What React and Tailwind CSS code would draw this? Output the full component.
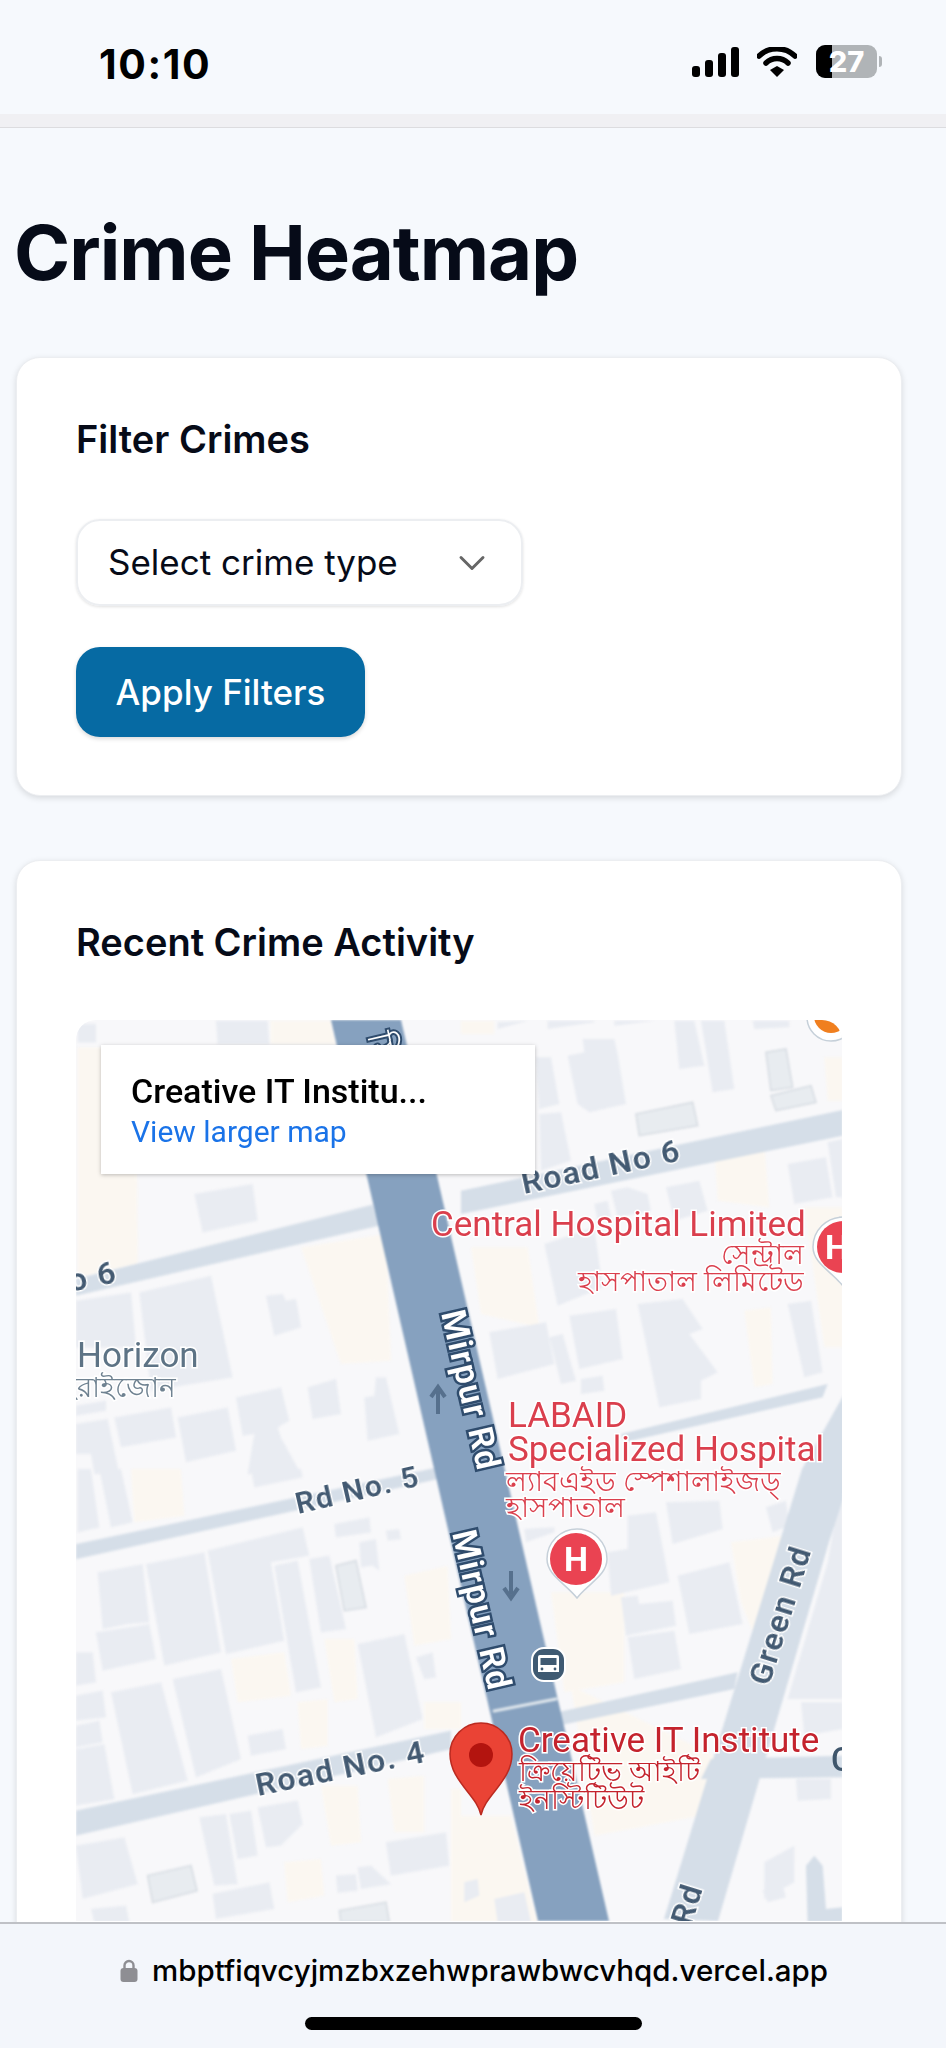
import { ChevronDown } from 'lucide-react';

// map shapes are traced from 3x crops, so each group below is scaled by 1/3
const groups = [
  {
    at: 'translate(70 1015) scale(.3333)',
    beige: [
      '20,100 195,100 200,750 20,790',
      '600,20 780,20 795,90 600,90',
      '690,700 945,660 960,1040 810,1050',
    ],
    roads: ['15,795 905,572 925,635 15,845'],
    blocks: [
      '20,85 20,30 75,30 75,85',
      '435,20 590,20 595,90 440,90',
      '370,540 545,510 560,620 395,655',
      '15,860 180,835 195,1000 15,1000',
      '205,835 420,785 485,1090 240,1130',
      '585,845 635,840 645,860 675,855 690,940 610,965',
      '495,1150 630,1120 655,1220 620,1240 630,1270 690,1380 530,1380 550,1260 515,1265',
      '710,1120 795,1095 810,1200 725,1215',
      '880,1150 910,1145 915,1090 945,1090 985,1260 890,1280',
      '130,1210 300,1180 315,1270 150,1300',
      '320,1210 470,1180 495,1310 345,1345',
      '15,1175 105,1160 105,1190 15,1205',
      '15,1230 110,1215 145,1380 70,1380 60,1320 15,1320',
    ],
  },
  {
    at: 'translate(460 1015) scale(.3333)',
    beige: [
      '0,20 100,20 100,60 0,60',
      '1090,130 1145,130 1145,260 1100,260',
      '760,400 910,390 925,580 770,560',
      '30,700 200,700 235,940 60,900',
      '850,890 930,880 935,1110 880,1120',
      '1030,580 1145,580 1145,1000 1090,1000',
    ],
    roads: ['0,530 1145,288 1145,365 0,600', '480,1260 1100,1110 1085,1150 490,1285'],
    blocks: [
      '225,130 270,130 295,270 235,285',
      '235,300 300,295 330,440 240,470',
      '365,75 460,75 470,120 495,270 385,295 350,270 320,125 370,115',
      '640,20 700,20 730,155 655,165',
      '720,20 790,20 820,225 755,235',
      '875,20 985,20 985,40 880,45',
      '260,20 400,20 400,25 260,45',
      '460,20 580,20 460,35',
      '110,25 200,20 110,45',
      '980,450 1095,430 1115,550 1000,570',
      '1100,385 1145,375 1145,550 1125,550',
      '250,690 400,640 425,820 290,875',
      '400,570 440,560 450,610 410,620',
      '450,530 500,520 560,540 570,590 470,610',
      '615,520 715,500 740,590 640,620',
      '85,955 255,925 280,1050 110,1095',
      '265,970 305,960 345,1100 300,1110',
      '325,905 465,885 485,1035 355,1065',
      '530,870 665,855 725,945 685,960 770,1075 720,1100 720,1155 595,1180',
      '980,870 1050,860 1085,1075 1030,1090',
      '360,1095 425,1085 430,1130 360,1140',
    ],
    outlined: [
      '915,115 975,105 995,220 930,230',
      '930,245 1050,215 1065,265 945,290',
      '525,300 695,265 710,335 535,365',
    ],
  },
  {
    at: 'translate(70 1470) scale(.3333)',
    beige: [
      '180,0 330,0 340,140 190,160',
      '480,570 640,550 660,680 500,700',
      '680,700 770,690 770,830 690,840',
      '760,510 850,510 860,690 790,700',
      '1000,320 1130,290 1140,510 1030,530',
      '1060,700 1170,700 1170,780 1060,780',
      '750,950 860,950 870,1120 780,1130',
      '950,930 1060,920 1060,1090 970,1090',
      '640,1180 750,1170 760,1280 650,1300',
      '1140,960 1170,960 1170,1360 1140,1360',
    ],
    roads: ['15,225 1100,-5 1100,30 15,270', '15,1025 1140,785 1140,840 15,1100'],
    blocks: [
      '20,0 60,0 85,175 20,190',
      '85,0 150,0 185,160 120,175',
      '540,0 690,0 695,25 550,55',
      '410,245 695,175 715,260 600,280 640,515 465,555',
      '225,285 400,250 450,550 280,590',
      '80,310 215,285 235,460 170,465 95,480',
      '75,490 235,465 255,570 95,605',
      '610,290 680,275 750,655 675,670',
      '715,270 775,260 825,480 750,490',
      '790,165 895,145 900,190 795,205',
      '945,185 985,180 990,210 950,215',
      '865,220 915,210 925,305 905,290 870,295',
      '860,525 1000,495 1055,750 915,805',
      '1035,565 1085,550 1095,625 1060,630',
      '15,550 65,550 75,640 15,650',
      '15,680 95,665 105,745 15,755',
      '15,770 85,755 95,820 15,835',
      '15,840 100,825 130,990 15,1010',
      '120,670 270,640 350,935 185,975',
      '305,630 450,600 510,870 375,925',
      '530,800 635,780 645,840 540,860',
      '385,1045 465,1035 500,1245 430,1250',
      '475,1035 540,1025 560,1160 500,1170',
      '560,1015 680,995 695,1065 630,1130 585,1135',
      '15,1130 160,1105 200,1245 35,1290',
      '425,1275 595,1240 610,1320 435,1350',
      '795,1220 855,1215 860,1265 800,1272',
      '860,1195 900,1190 960,1245 870,1260',
      '945,1120 1125,1090 1135,1190 960,1220',
      '60,1320 165,1310 175,1360 70,1360',
    ],
    outlined: [
      '795,290 855,275 885,415 820,425',
      '230,1220 360,1190 378,1265 245,1300',
      '805,1325 945,1300 955,1360 810,1360',
    ],
  },
  {
    at: 'translate(460 1470) scale(.3333)',
    beige: [
      '270,370 490,370 490,640 310,670',
      '810,220 970,200 880,500 840,400',
      '0,1040 150,1040 230,1360 0,1360',
      '330,650 800,880 720,1040 400,1100',
    ],
    roads: [
      '290,730 830,610 820,660 290,770',
      '750,870 1145,860 1145,925 720,930',
      '1035,1190 1060,1160 1085,1190 1095,1320 1145,1315 1145,1360 1040,1360',
    ],
    blocks: [
      '190,180 280,175 280,190 195,220',
      '500,140 585,130 625,340 450,380 440,250 500,240',
      '615,100 775,95 785,180 635,225',
      '650,320 805,280 845,465 685,495',
      '480,385 530,380 535,405 635,395 645,470 495,500',
      '500,505 640,485 660,600 520,630',
      '915,115 975,95 985,170 935,190',
      '1145,20 1145,690 980,690 1100,280',
      '1020,700 1145,700 1145,780 1030,800',
      '1005,930 1110,930 1110,990 1010,995',
      '910,1180 1000,1130 1000,1240 910,1290',
      '905,1265 965,1250 975,1285 920,1300',
      '10,1240 50,1230 55,1280 10,1300',
      '100,1290 190,1270 210,1360 110,1360',
    ],
  },
];

const labels = [
  { text: 'Road No 6', x: 523, y: 1195, angle: -12, size: 32, spacing: 1.5 },
  { text: 'o 6', x: 70, y: 1293, angle: -12, size: 32, spacing: 1.5 },
  { text: 'Rd No. 5', x: 297, y: 1515, angle: -13, size: 30, spacing: 1.5 },
  { text: 'Road No. 4', x: 257, y: 1797, angle: -11.5, size: 32, spacing: 1.5 },
  { text: 'Green Rd', x: 768, y: 1688, angle: -72.7, size: 32, spacing: 1.5 },
  { text: 'Rd', x: 690, y: 1928, angle: -72.7, size: 32, spacing: 1.5 },
];

const places = [
  { text: 'Central Hospital Limited', x: 430, y: 1237, size: 35 },
  { text: 'LABAID', x: 507, y: 1428, size: 35 },
  { text: 'Specialized Hospital', x: 507, y: 1462, size: 35 },
  { text: 'সেন্ট্রাল', x: 803, y: 1265, size: 28, anchor: 'end' },
  { text: 'হাসপাতাল লিমিটেড', x: 803, y: 1292, size: 28, anchor: 'end' },
  { text: 'ল্যাবএইড স্পেশালাইজড্', x: 505, y: 1492, size: 28 },
  { text: 'হাসপাতাল', x: 505, y: 1518, size: 28 },
  { text: 'Creative IT Institute', x: 517, y: 1753, size: 35, fill: '#c4232d' },
  { text: 'ক্রিয়েটিভ আইটি', x: 518, y: 1782, size: 28, fill: '#c4232d' },
  { text: 'ইনস্টিটিউট', x: 518, y: 1810, size: 28, fill: '#c4232d' },
];

function MapDrawing() {
  return (
    <svg viewBox="75 1021 767 901" className="block w-[767px] h-[901px] font-[Roboto,'Noto_Sans',sans-serif]">
      <rect x="75" y="1021" width="767" height="901" fill="#f8f8fa" />
      <g className="blur-[1px]">
        {groups.map((g) => (
          <g key={g.at} transform={g.at}>
            {g.beige.map((p) => <polygon key={p} points={p} fill="#fbf7f1" />)}
          </g>
        ))}
        {groups.map((g) => (
          <g key={g.at} transform={g.at}>
            {g.blocks.map((p) => <polygon key={p} points={p} fill="#e9ecf2" />)}
            {(g.outlined || []).map((p) => <polygon key={p} points={p} fill="#e8ecf0" stroke="#d9dee4" strokeWidth="5" />)}
            {g.roads.map((p) => <polygon key={p} points={p} fill="#d5dee8" />)}
          </g>
        ))}
        {/* Green Rd and Mirpur Rd sit over the side streets */}
        <polygon points="860,1365 801,1470 663,1920 717,1922 828,1543 842,1500" fill="#d5dee8" />
        <polygon points="330,1021 400,1021 608,1922 537,1922" fill="#86a1bf" />
        <path d="M493 1712 L555 1700" stroke="#dfe6ec" strokeWidth="3" strokeLinecap="round" />
      </g>

      <path d="M437 1415 V1392 M430 1398 L437 1388 L444 1398" stroke="#56708d" strokeWidth="4" fill="none" />
      <path d="M510 1572 V1595 M503 1589 L510 1599 L517 1589" stroke="#56708d" strokeWidth="4" fill="none" />

      {labels.map((l) => (
        <text
          key={l.text + l.x}
          transform={`translate(${l.x} ${l.y}) rotate(${l.angle})`}
          fontSize={l.size}
          fontWeight="600"
          letterSpacing={l.spacing}
          fill="#435a72"
          stroke="#fff"
          strokeWidth="3"
          className="[paint-order:stroke]"
        >
          {l.text}
        </text>
      ))}
      {[[440, 1314], [451, 1534]].map(([x, y]) => (
        <text
          key={y}
          transform={`translate(${x} ${y}) rotate(77)`}
          fontSize="34"
          fontWeight="600"
          letterSpacing="1.5"
          fill="#fff"
          stroke="#2f4c6d"
          strokeWidth="5"
          className="[paint-order:stroke]"
        >
          Mirpur Rd
        </text>
      ))}
      <text transform="translate(366 1036) rotate(77)" fontSize="34" fill="#fff" stroke="#2f4c6d" strokeWidth="4" className="[paint-order:stroke]">
        মিরপুর
      </text>

      <text x="76" y="1368" fontSize="35" fill="#5d7385" stroke="#fff" strokeWidth="3" className="[paint-order:stroke]">Horizon</text>
      <text x="175" y="1398" textAnchor="end" fontSize="28" fill="#6f8291" stroke="#fff" strokeWidth="3" className="[paint-order:stroke]">হরাইজোন</text>
      {places.map((p) => (
        <text
          key={p.text}
          x={p.x}
          y={p.y}
          textAnchor={p.anchor || 'start'}
          fontSize={p.size}
          fill={p.fill || '#da3f4d'}
          stroke="#fff"
          strokeWidth="3"
          className="[paint-order:stroke]"
        >
          {p.text}
        </text>
      ))}
      <text x="830" y="1772" fontSize="33" fontWeight="500" fill="#3f566c">C</text>

      {/* hospital markers */}
      <path d="M546 1560 a30 30 0 1 1 60 0 c0 16 -18 24 -30 39 c-12 -15 -30 -23 -30 -39z" fill="#fff" stroke="#c6d0d9" strokeWidth="1.5" />
      <circle cx="575" cy="1560" r="26" fill="#ea4352" />
      <text x="575" y="1572" textAnchor="middle" fontSize="34" fontWeight="700" fill="#fff">H</text>
      <path d="M812 1248 a30 30 0 1 1 60 0 c0 16 -18 24 -30 39 c-12 -15 -30 -23 -30 -39z" fill="#fff" stroke="#c6d0d9" strokeWidth="1.5" />
      <circle cx="842" cy="1248" r="26" fill="#ea4352" />
      <text x="824" y="1260" fontSize="34" fontWeight="700" fill="#fff">H</text>
      {/* orange marker clipped at the top */}
      <circle cx="830" cy="1018" r="24" fill="#fff" stroke="#c6d0d9" strokeWidth="1.5" />
      <circle cx="830" cy="1017" r="17" fill="#f07f1f" />

      {/* bus stop */}
      <rect x="531" y="1649" width="33" height="33" rx="12" fill="#3f5a72" stroke="#fff" strokeWidth="2" />
      <path d="M539 1656 h17 a2 2 0 0 1 2 2 v15 h-21 v-15 a2 2 0 0 1 2 -2z" fill="#fff" />
      <rect x="539.5" y="1659" width="16" height="7" fill="#3f5a72" />
      <circle cx="541" cy="1670" r="1.4" fill="#3f5a72" />
      <circle cx="554" cy="1670" r="1.4" fill="#3f5a72" />

      {/* place pin */}
      <path
        d="M480 1816 C476 1796 449 1782 449 1755 A31 31 0 0 1 511 1755 C511 1782 484 1796 480 1816Z"
        fill="#ea4335"
        stroke="#bb2a20"
        strokeWidth="1.5"
      />
      <circle cx="480" cy="1756" r="12" fill="#b3140f" />
    </svg>
  );
}

function StatusBar() {
  return (
    <div className="flex items-center justify-between h-[114px] pl-[99px] pr-[64px] pt-[9px] bg-[#f6f9fd]">
      <span className="mt-[5px] text-[41px] leading-none font-bold text-black tracking-[1.6px]">10:10</span>
      <div className="flex items-center">
        <svg viewBox="0 0 47 30" className="w-[47px] h-[30px]">
          <rect x="0" y="19" width="8" height="11" rx="3" />
          <rect x="13" y="13" width="8" height="17" rx="3" />
          <rect x="26" y="6" width="8" height="24" rx="3" />
          <rect x="39" y="0" width="8" height="30" rx="3" />
        </svg>
        <svg viewBox="0 0 40 30" className="w-10 h-[30px] ml-[18px]">
          <path d="M2 9 a26 26 0 0 1 36 0" fill="none" stroke="#000" strokeWidth="5.5" strokeLinecap="round" />
          <path d="M9 16 a16 16 0 0 1 22 0" fill="none" stroke="#000" strokeWidth="5.5" strokeLinecap="round" />
          <path d="M13 23 L20 19 L27 23 L20 30Z" />
        </svg>
        <div className="relative w-[61px] h-[33px] ml-[19px] rounded-[9px] overflow-hidden bg-[#b0b4b7]">
          <div className="w-4 h-full bg-black" />
          <span className="absolute inset-0 flex items-center justify-center text-[29px] leading-none font-extrabold text-white">
            27
          </span>
        </div>
        <div className="w-[3px] h-[11px] ml-[2px] rounded-r-full bg-[#b0b4b7]" />
      </div>
    </div>
  );
}

export default function App() {
  return (
    <div className="relative h-[2048px] overflow-hidden bg-[#f6f9fd] font-[Inter,sans-serif] text-[#060b18]">
      <StatusBar />
      <div className="h-[14px] bg-[#f0f0f3] border-b border-[#dcdcdf]" />

      <main className="pl-4 pr-[44px]">
        <h1 className="mt-[79px] -ml-[2px] text-[76px] leading-[90px] font-bold tracking-[-1px]">Crime Heatmap</h1>

        <section className="mt-[60px] h-[439px] px-[59px] pt-[58px] bg-white rounded-[24px] border border-[#eceef1] shadow-[0_2px_6px_rgba(0,0,0,0.13)]">
          <h2 className="text-[38px] leading-[46px] font-semibold">Filter Crimes</h2>
          <div className="flex items-center justify-between mt-[57px] w-[447px] h-[87px] pl-[30px] pr-[27px] rounded-[24px] border-2 border-[#eceef1] shadow-[0_1px_3px_rgba(0,0,0,0.12)]">
            <span className="text-[35px]">Select crime type</span>
            <ChevronDown size={44} strokeWidth={1.6} className="text-[#666]" />
          </div>
          <button className="block mt-[41px] w-[289px] h-[90px] rounded-[24px] bg-[#066aa3] text-white text-[35px] font-medium shadow-[0_2px_4px_rgba(0,0,0,0.15)]">
            Apply Filters
          </button>
        </section>

        <section className="mt-[64px] px-[59px] pt-[58px] pb-10 bg-white rounded-t-[24px] border border-[#eceef1] shadow-[0_2px_6px_rgba(0,0,0,0.13)]">
          <h2 className="text-[38px] leading-[46px] font-semibold">Recent Crime Activity</h2>
          <div className="relative mt-[55px] rounded-t-[20px] overflow-hidden">
            <MapDrawing />
            <div className="absolute left-[25px] top-[25px] w-[434px] h-[129px] pl-[30px] pt-[26px] bg-white shadow-[0_1px_4px_rgba(0,0,0,0.25)] font-[Roboto,sans-serif]">
              <div className="text-[34px] leading-[40px] font-medium text-black">Creative IT Institu...</div>
              <div className="text-[30px] leading-[40px] mt-[1px] text-[#1a73e8]">View larger map</div>
            </div>
          </div>
        </section>
      </main>

      {/* browser address bar floats over the page */}
      <div className="absolute inset-x-0 bottom-0 h-[126px] bg-[#f3f6fb] border-t-2 border-[#bfc1c6]">
        <div className="flex items-center mt-[32px] pl-[120px]">
          <svg viewBox="0 0 18 23" className="w-[18px] h-[23px]">
            <path d="M4.5 10 V6.5 a4.5 4.5 0 0 1 9 0 V10" fill="none" stroke="#8e8e93" strokeWidth="2.4" />
            <rect x="0.5" y="9" width="17" height="14" rx="3" fill="#8e8e93" />
          </svg>
          <span className="ml-[14px] text-[29.5px] leading-none font-medium text-black">
            mbptfiqvcyjmzbxzehwprawbwcvhqd.vercel.app
          </span>
        </div>
        <div className="mt-[31px] ml-[305px] w-[337px] h-[13px] rounded-full bg-black" />
      </div>
    </div>
  );
}
